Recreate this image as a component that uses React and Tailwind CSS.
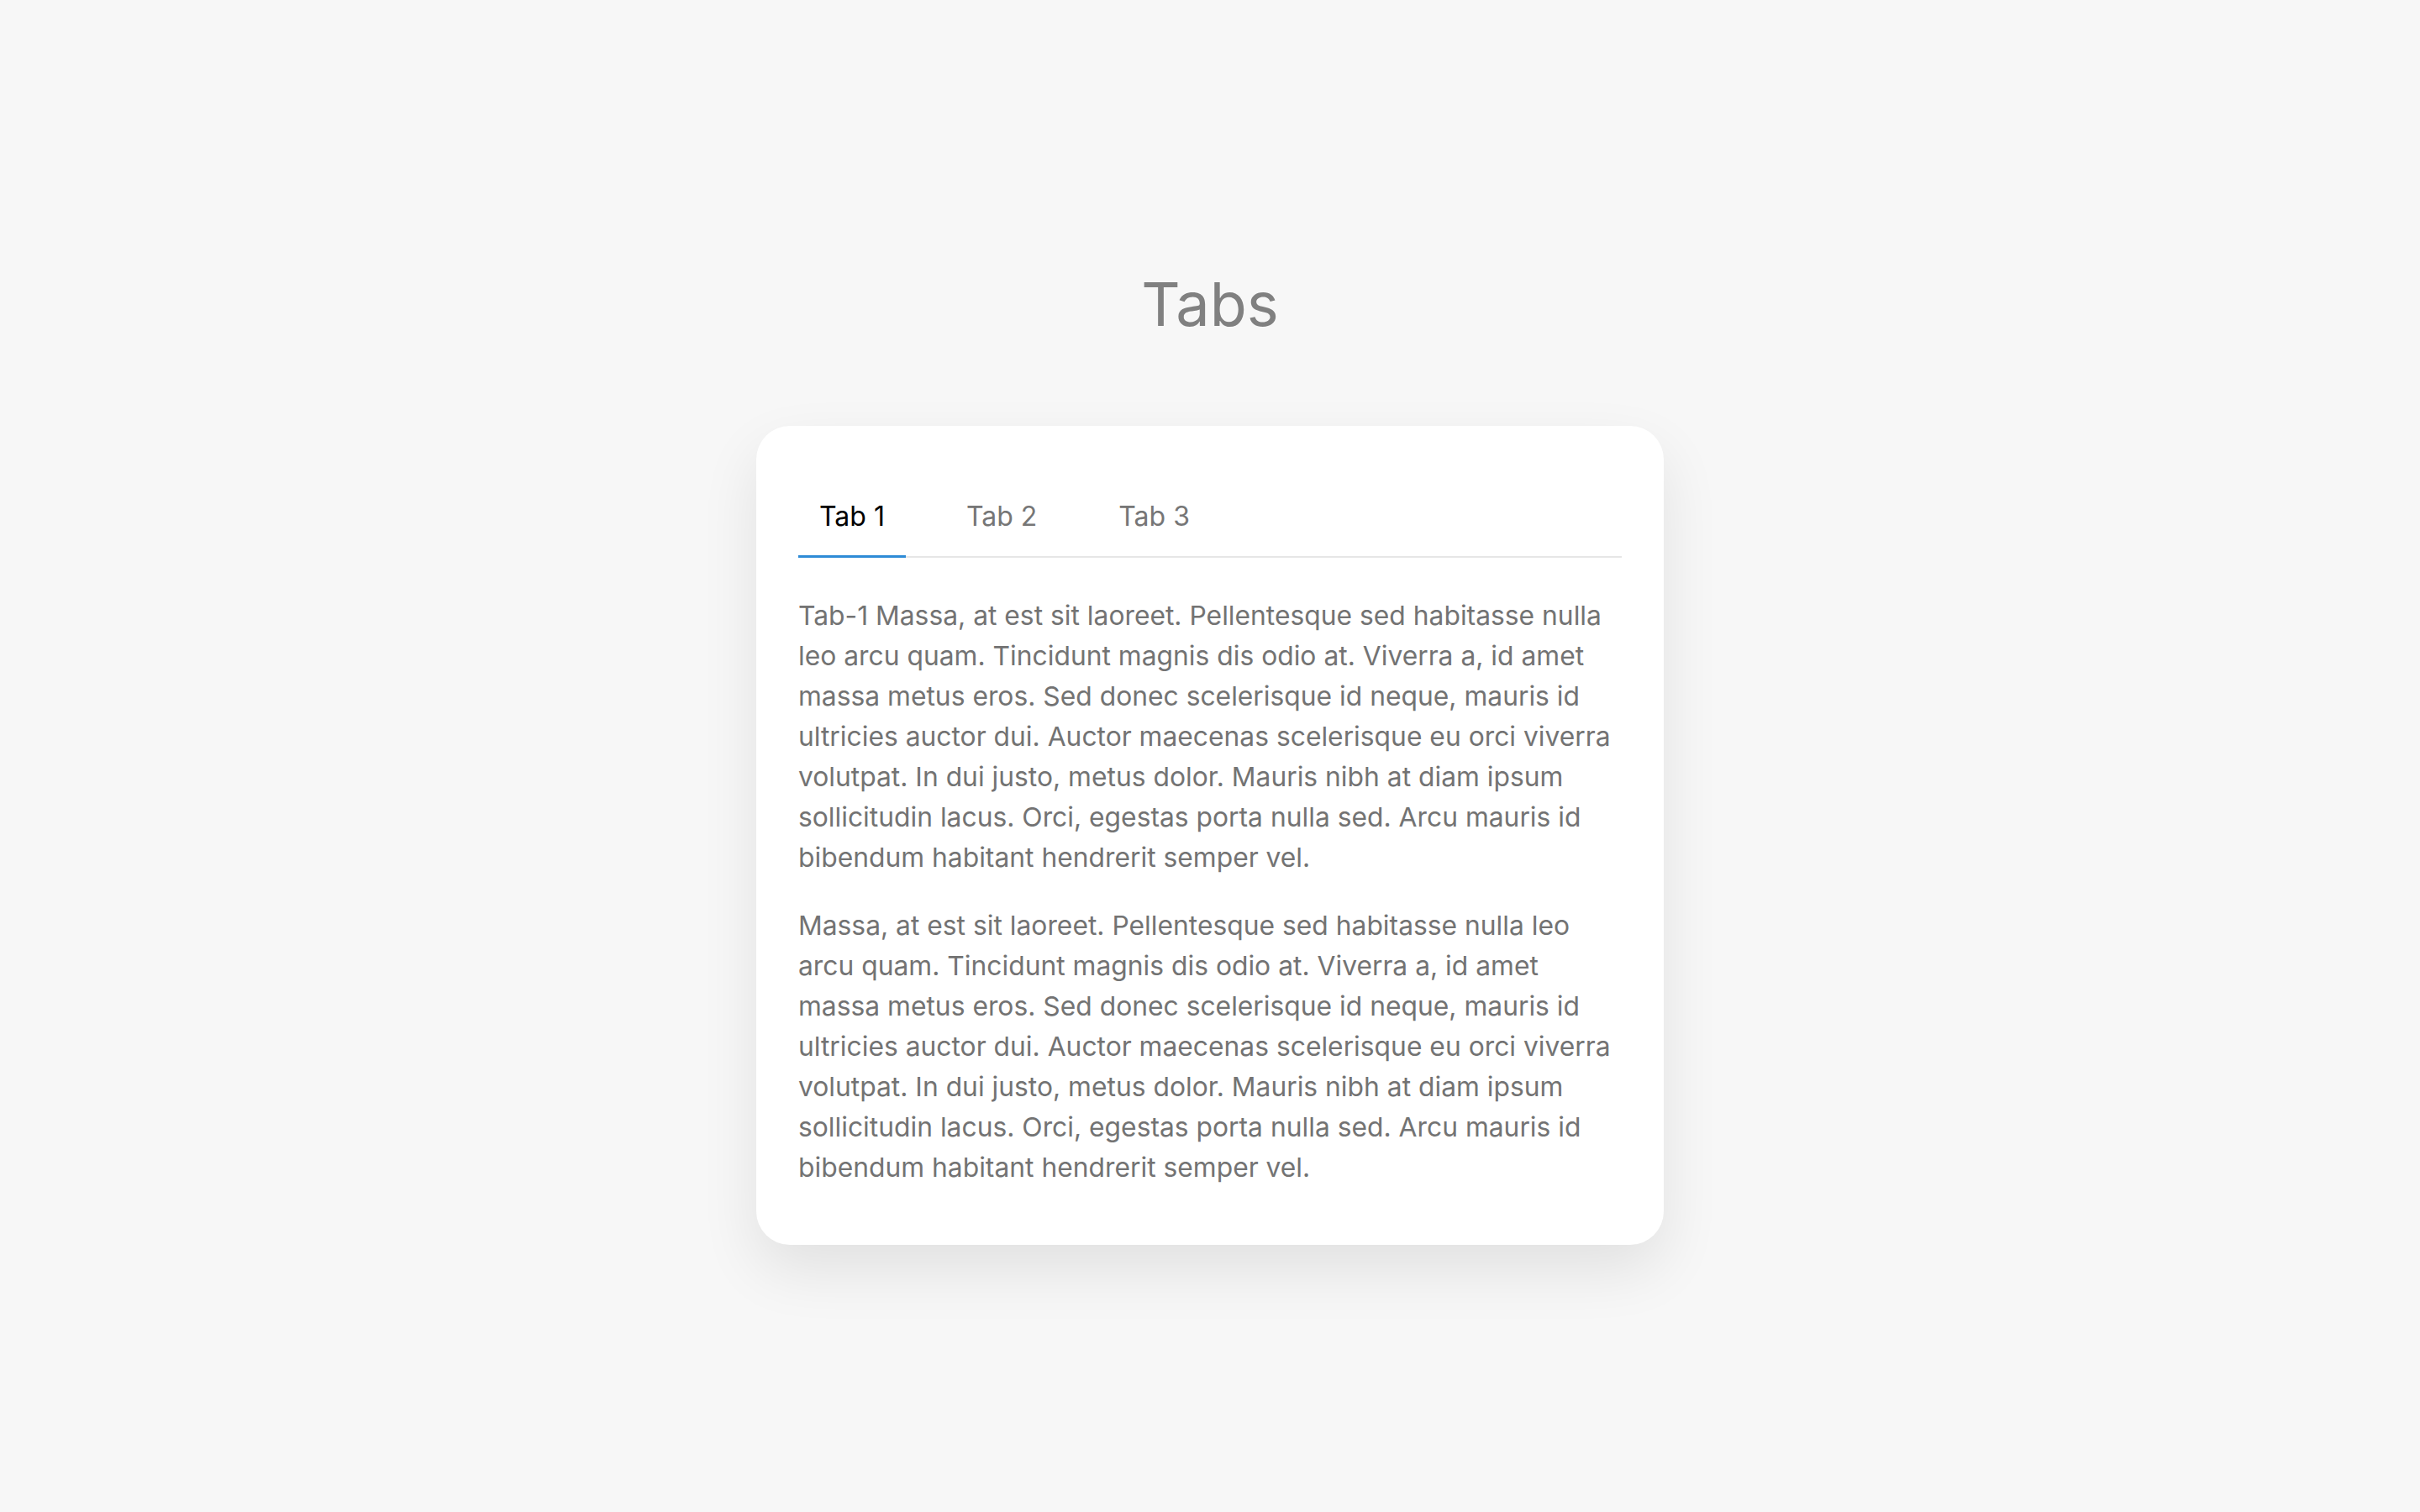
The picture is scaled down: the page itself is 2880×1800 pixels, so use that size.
const tabs = ["Tab 1", "Tab 2", "Tab 3"];

const text =
  "Massa, at est sit laoreet. Pellentesque sed habitasse nulla leo arcu quam. Tincidunt magnis dis odio at. Viverra a, id amet massa metus eros. Sed donec scelerisque id neque, mauris id ultricies auctor dui. Auctor maecenas scelerisque eu orci viverra volutpat. In dui justo, metus dolor. Mauris nibh at diam ipsum sollicitudin lacus. Orci, egestas porta nulla sed. Arcu mauris id bibendum habitant hendrerit semper vel.";

export default function App() {
  const active = 0;
  return (
    <div className="min-h-screen bg-[#f7f7f7] font-['Inter',sans-serif] flex flex-col items-center pt-[312px]">
      <h1 className="text-[72px] leading-[100px] text-[#808080] font-normal">Tabs</h1>

      <div className="mt-[95px] w-[1080px] bg-white rounded-[40px] shadow-[0_30px_70px_rgba(0,0,0,0.09)] px-[50px] pt-[50px] pb-[68px]">
        {/* tab bar */}
        <div className="flex gap-[47px] border-b-2 border-[#e6e6e6]">
          {tabs.map((t, i) => (
            <button
              key={t}
              className={
                i === active
                  ? "px-[25px] pt-[34px] pb-[22px] text-[32px] leading-[48px] text-black border-b-[3px] border-[#2e8bd6] -mb-[2px]"
                  : "px-[25px] pt-[34px] pb-[22px] text-[32px] leading-[48px] text-[#767676] border-b-[3px] border-transparent -mb-[2px]"
              }
            >
              {t}
            </button>
          ))}
        </div>

        {/* panel */}
        <div className="pt-[45px] text-[31.8px] leading-[48px] text-[#737373]">
          <p className="mb-[33px]">Tab-1 {text}</p>
          <p>{text}</p>
        </div>
      </div>
    </div>
  );
}
